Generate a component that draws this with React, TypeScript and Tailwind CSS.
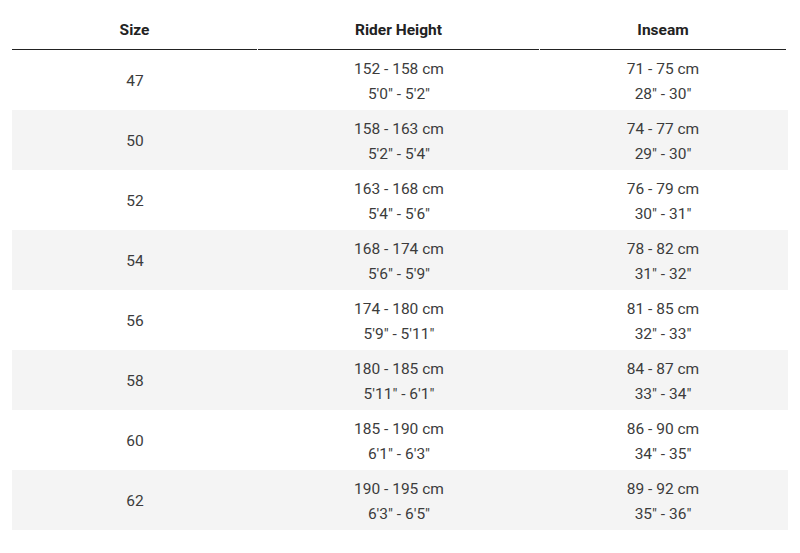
const rows = [
  { size: "47", cm: "152 - 158 cm", ft: `5'0" - 5'2"`, ins: "71 - 75 cm", inch: `28" - 30"` },
  { size: "50", cm: "158 - 163 cm", ft: `5'2" - 5'4"`, ins: "74 - 77 cm", inch: `29" - 30"` },
  { size: "52", cm: "163 - 168 cm", ft: `5'4" - 5'6"`, ins: "76 - 79 cm", inch: `30" - 31"` },
  { size: "54", cm: "168 - 174 cm", ft: `5'6" - 5'9"`, ins: "78 - 82 cm", inch: `31" - 32"` },
  { size: "56", cm: "174 - 180 cm", ft: `5'9" - 5'11"`, ins: "81 - 85 cm", inch: `32" - 33"` },
  { size: "58", cm: "180 - 185 cm", ft: `5'11" - 6'1"`, ins: "84 - 87 cm", inch: `33" - 34"` },
  { size: "60", cm: "185 - 190 cm", ft: `6'1" - 6'3"`, ins: "86 - 90 cm", inch: `34" - 35"` },
  { size: "62", cm: "190 - 195 cm", ft: `6'3" - 6'5"`, ins: "89 - 92 cm", inch: `35" - 36"` },
];

export default function App() {
  return (
    <div className="w-[800px] h-[553px] bg-white px-[12px] font-['Roboto',sans-serif] text-[15.5px] text-[#3c3c3c]">
      {/* header */}
      <div className="grid grid-cols-[246px_282px_246px] h-[50px]">
        <div className="flex items-center justify-center pt-[13px] border-b border-[#222] mr-px font-bold text-[#222]">Size</div>
        <div className="flex items-center justify-center pt-[13px] border-b border-[#222] mr-px font-bold text-[#222]">Rider Height</div>
        <div className="flex items-center justify-center pt-[13px] border-b border-[#222] font-bold text-[#222]">Inseam</div>
      </div>
      {rows.map((r, i) => (
        <div
          key={r.size}
          className={`grid grid-cols-[246px_282px_246px] h-[60px] pt-[3px] ${i % 2 === 1 ? "bg-[#f4f4f4]" : "bg-white"}`}
        >
          <div className="flex items-center justify-center">{r.size}</div>
          <div className="flex flex-col items-center justify-center leading-[25px]">
            <span>{r.cm}</span>
            <span>{r.ft}</span>
          </div>
          <div className="flex flex-col items-center justify-center leading-[25px]">
            <span>{r.ins}</span>
            <span>{r.inch}</span>
          </div>
        </div>
      ))}
    </div>
  );
}
